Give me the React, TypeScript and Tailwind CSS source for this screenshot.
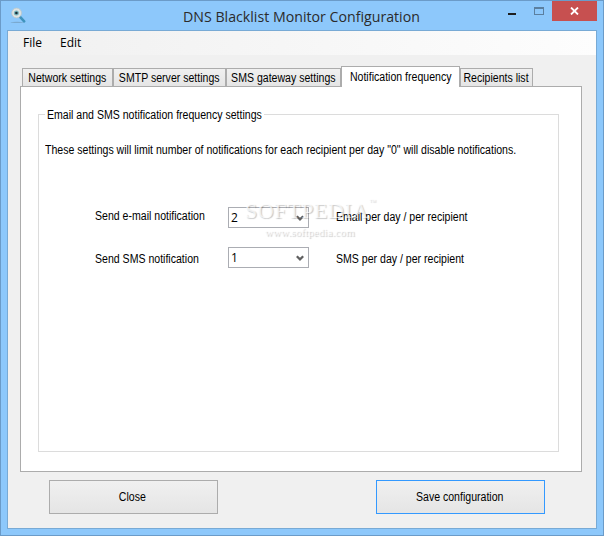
import { useState, type ReactNode } from "react";
import clsx from "clsx";

const TABS = [
  { label: "Network settings", width: "w-[91px]" },
  { label: "SMTP server settings", width: "w-[113px]" },
  { label: "SMS gateway settings", width: "w-[115px]" },
  { label: "Notification frequency", width: "w-[119px]" },
  { label: "Recipients list", width: "w-[73px]" },
];

/* Condensed dialog text */
function Label({ children, className = "origin-left" }: { children: ReactNode; className?: string }) {
  return (
    <span className={clsx("inline-block scale-x-[0.88] whitespace-nowrap", className)}>
      {children}
    </span>
  );
}

function AppIcon() {
  return (
    <svg width="18" height="18" viewBox="0 0 18 18" className="shrink-0">
      <ellipse cx="7" cy="15.4" rx="6.5" ry="0.6" fill="#7aa9cf" />
      <path d="M9.8 9.6l4.4 4.8" stroke="#3f93bd" strokeWidth="2.6" strokeLinecap="round" />
      <circle cx="6.6" cy="6" r="4.9" fill="#dfe3e2" stroke="#b7c6cd" strokeWidth="0.8" />
      <circle cx="6.4" cy="6" r="2.5" fill="#78b5bc" />
      <circle cx="6.4" cy="6" r="1.3" fill="#152c38" />
    </svg>
  );
}

function TitleBar() {
  return (
    <div className="relative flex h-[29px] items-start">
      <div className="pt-[6px] pl-[9px]">
        <AppIcon />
      </div>
      <h1 className="absolute top-[4px] left-[182px] origin-left scale-x-[0.945] font-['Open_Sans',sans-serif] text-[15px] leading-[22px] whitespace-nowrap text-[#2b2b2b]">
        DNS Blacklist Monitor Configuration
      </h1>
      <div className="ml-auto flex h-[20px] items-start pr-[6px]">
        <button aria-label="Minimize" className="mt-[12px] mr-[18px] h-[2px] w-[8px] bg-[#1e1e1e]" />
        <button aria-label="Maximize" className="mt-[6px] mr-[8px] h-[8px] w-[10px] border border-t-2 border-[#5b7f9f]" />
        <button aria-label="Close" className="flex h-[20px] w-[45px] items-center justify-center bg-[#c75050]">
          <svg width="9" height="8" viewBox="0 0 9 8">
            <path d="M1 0.5l7 7M8 0.5l-7 7" stroke="#fff" strokeWidth="1.8" />
          </svg>
        </button>
      </div>
    </div>
  );
}

function MenuBar() {
  return (
    <nav className="flex h-[24px] bg-linear-to-r from-[#f0f0f0] to-[#fdfdfd] pl-[15px] font-['Open_Sans',sans-serif] text-[12px] leading-[24px]">
      <span className="w-[37px]">File</span>
      <span>Edit</span>
    </nav>
  );
}

function ComboBox({ value }: { value: string }) {
  return (
    <div className="flex h-[21px] w-[81px] items-center border border-[#abadb3] bg-white pr-[4px] pl-[2px] font-['Open_Sans',sans-serif] text-[12px] leading-[17px]">
      <span className="pb-[1px]">{value}</span>
      <svg width="8" height="7" viewBox="0 0 8 7" className="mt-[2px] ml-auto">
        <path d="M0.8 1.2L4 4.4L7.2 1.2" fill="none" stroke="#606060" strokeWidth="2.2" />
      </svg>
    </div>
  );
}

function Watermark() {
  return (
    <div className="pointer-events-none absolute top-[83px] left-[206px] w-[134px] font-['Liberation_Serif',serif] whitespace-nowrap text-white/70 [text-shadow:1px_1px_1px_rgba(0,0,0,0.22)]">
      <div className="flex items-start">
        <span className="text-[22px] leading-[26px] tracking-[0.6px]">SOFTPEDIA</span>
        <span className="text-[7px] leading-[8px]">™</span>
      </div>
      <div className="pl-[20px] text-[11px] leading-[17px] tracking-[0.1px]">www.softpedia.com</div>
    </div>
  );
}

export default function App() {
  const [active, setActive] = useState(3);

  return (
    <div className="h-[536px] w-[604px] overflow-hidden border border-[#6b9bc8] bg-[#8dc8fb] font-['Liberation_Sans',Arial,sans-serif] text-[12px] text-black">
      <TitleBar />
      <div className="ml-[6px] h-[499px] w-[590px] border border-[#78aad5] bg-[#f0f0f0] bg-clip-padding">
        <MenuBar />

        <div className="mt-[11px] ml-[12px] w-[562px]">
          <div className="flex h-[20px] items-end pl-[2px]">
            {TABS.map((tab, i) => (
              <button
                key={tab.label}
                onClick={() => setActive(i)}
                className={clsx(
                  "flex shrink-0 items-center justify-center border border-b-0 border-[#acacac]",
                  tab.width,
                  i === active
                    ? "relative z-10 -mb-px h-[21px] bg-white pb-[1px]"
                    : "h-[18px] bg-linear-to-b from-[#f0f0f0] to-[#e5e5e5]",
                )}
              >
                <Label className="-mx-4">{tab.label}</Label>
              </button>
            ))}
          </div>

          <div className="h-[386px] border border-[#acacac] bg-white px-[17px] pt-[20px]">
            <section className="relative mt-[7px] h-[338px] w-[521px] border border-[#dcdcdc]">
              <h2 className="-mt-[8px] ml-[6px] w-[219px] bg-white pl-[2px] leading-[16px]">
                <Label>Email and SMS notification frequency settings</Label>
              </h2>
              <p className="mt-[19px] ml-[6px] leading-[16px] whitespace-nowrap">
                <Label>
                  These settings will limit number of notifications for each recipient per day "0" will disable notifications.
                </Label>
              </p>
              <div className="mt-[49px] flex pl-[56px] leading-[16px]">
                <div className="w-[133px] pt-[1px]">
                  <Label>Send e-mail notification</Label>
                </div>
                <ComboBox value="2" />
                <div className="ml-[27px] pt-[2px]">
                  <Label>Email per day / per recipient</Label>
                </div>
              </div>
              <div className="mt-[19px] flex pl-[56px] leading-[16px]">
                <div className="w-[133px] pt-[4px]">
                  <Label>Send SMS notification</Label>
                </div>
                <ComboBox value="1" />
                <div className="ml-[27px] pt-[4px]">
                  <Label>SMS per day / per recipient</Label>
                </div>
              </div>
              <Watermark />
            </section>
          </div>
        </div>

        <div className="mt-[8px] flex justify-between pr-[51px] pl-[41px]">
          <button className="h-[34px] w-[169px] border border-[#acacac] bg-linear-to-b from-[#f0f0f0] to-[#e5e5e5] pr-[2px]">
            <Label className="origin-center">Close</Label>
          </button>
          <button className="h-[34px] w-[169px] border border-[#3399ff] bg-linear-to-b from-[#f0f0f0] to-[#e5e5e5] pr-[2px]">
            <Label className="origin-center">Save configuration</Label>
          </button>
        </div>
      </div>
    </div>
  );
}
